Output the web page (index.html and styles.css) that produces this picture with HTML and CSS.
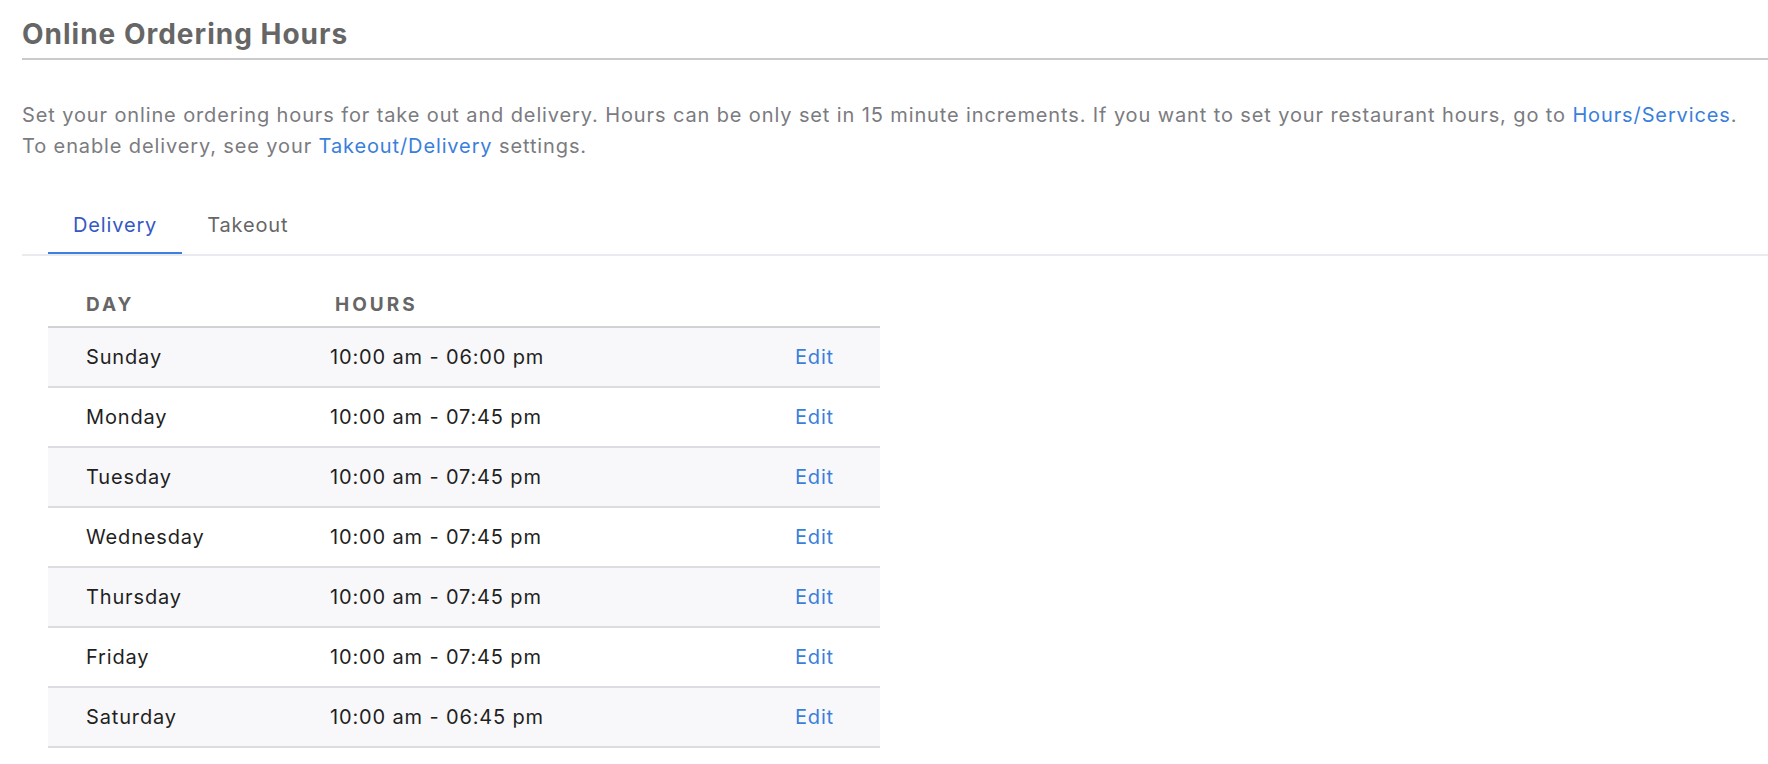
FILE: index.html
```html
<!DOCTYPE html>
<html lang="en">
<head>
  <meta charset="UTF-8">
  <title>Online Ordering Hours</title>
  <meta name="viewport" content="width=device-width, initial-scale=1">
  <link rel="stylesheet" href="styles.css">
</head>
<body>

  <div class="page">
    <h2 class="page-title">Online Ordering Hours</h2>

    <p class="intro">
      Set your online ordering hours for take out and delivery. Hours can be only set in 15 minute increments. If you want to set your restaurant hours, go to <a href="#">Hours/Services</a>.<br>
      To enable delivery, see your <a href="#">Takeout/Delivery</a> settings.
    </p>

    <div class="tabs">
      <a href="#" class="tab active">Delivery</a>
      <a href="#" class="tab">Takeout</a>
    </div>

    <table class="hours">
      <thead>
        <tr>
          <th class="col-day">Day</th>
          <th class="col-hours">Hours</th>
          <th></th>
        </tr>
      </thead>
      <tbody>
        <tr><td>Sunday</td><td>10:00 am - 06:00 pm</td><td class="edit"><a href="#">Edit</a></td></tr>
        <tr><td>Monday</td><td>10:00 am - 07:45 pm</td><td class="edit"><a href="#">Edit</a></td></tr>
        <tr><td>Tuesday</td><td>10:00 am - 07:45 pm</td><td class="edit"><a href="#">Edit</a></td></tr>
        <tr><td>Wednesday</td><td>10:00 am - 07:45 pm</td><td class="edit"><a href="#">Edit</a></td></tr>
        <tr><td>Thursday</td><td>10:00 am - 07:45 pm</td><td class="edit"><a href="#">Edit</a></td></tr>
        <tr><td>Friday</td><td>10:00 am - 07:45 pm</td><td class="edit"><a href="#">Edit</a></td></tr>
        <tr><td>Saturday</td><td>10:00 am - 06:45 pm</td><td class="edit"><a href="#">Edit</a></td></tr>
      </tbody>
    </table>
  </div>

</body>
</html>
```

FILE: styles.css
```css
* {
  box-sizing: border-box;
}

body {
  margin: 0;
  padding: 0;
  font-family: Inter, 'Noto Sans', sans-serif;
  background: #ffffff;
  color: #1f1f1f;
}

a {
  color: #3a7fdb;
  text-decoration: none;
}

.page {
  padding: 17px 0 0 22px;
}

.page-title {
  margin: 0;
  padding-bottom: 7px;
  font-size: 28px;
  line-height: 34px;
  font-weight: 700;
  letter-spacing: 1px;
  color: #666666;
  border-bottom: 2px solid #cacace;
}

.intro {
  margin: 40px 0 0;
  font-size: 20px;
  line-height: 31px;
  letter-spacing: 0.88px;
  color: #7b7b80;
}

.tabs {
  display: flex;
  margin-top: 38px;
  padding-left: 26px;
  border-bottom: 2px solid #ebebef;
}

.tab {
  padding: 10px 25px 12px;
  font-size: 20px;
  line-height: 30px;
  letter-spacing: 0.85px;
  color: #666666;
  border-bottom: 2px solid transparent;
}

.tab.active {
  color: #3558c4;
  border-bottom-color: #3b80df;
}

.hours {
  margin: 22px 0 0 26px;
  width: 832px;
  border-collapse: collapse;
}

.hours th {
  padding: 15px 0 9px;
  text-align: left;
  font-size: 19px;
  line-height: 24px;
  font-weight: 700;
  letter-spacing: 3px;
  text-transform: uppercase;
  color: #666666;
  border-bottom: 2px solid #d2d2d6;
}

.hours th.col-day {
  width: 282px;
  padding-left: 38px;
}

.hours th.col-hours {
  padding-left: 5px;
}

.hours td {
  height: 60px;
  padding: 0;
  font-size: 20px;
  letter-spacing: 0.85px;
  color: #1f1f1f;
  border-bottom: 2px solid #dddde1;
}

.hours td:first-child {
  padding-left: 38px;
}

.hours tbody tr:nth-child(odd) td {
  background: #f8f8fa;
}

.hours td.edit {
  text-align: right;
  padding-right: 46px;
}
```
